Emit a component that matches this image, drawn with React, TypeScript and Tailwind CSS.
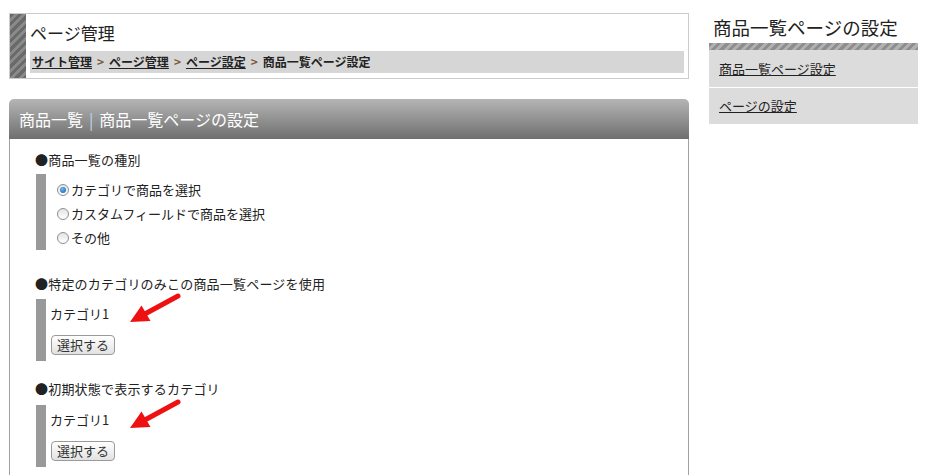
import React from "react";

const font = "font-['Noto_Sans_CJK_JP','Noto_Sans',sans-serif]";

function Radio({ checked }: { checked?: boolean }) {
  return (
    <span className="flex size-[12px] items-center justify-center rounded-full border border-[#8f8f8f] bg-[linear-gradient(180deg,#e4e4e4,#ffffff)]">
      {checked && (
        <span className="size-[6px] rounded-full bg-[radial-gradient(circle_at_40%_35%,#6fb6f0,#0b5fb0)]" />
      )}
    </span>
  );
}

function Arrow() {
  return (
    <svg
      className="absolute left-[90px] top-[-8px]"
      width="60"
      height="36"
      viewBox="0 0 60 36"
    >
      <line x1="17" y1="24" x2="52" y2="5" stroke="#ee1111" strokeWidth="5" strokeLinecap="round" />
      <polygon points="4,31 15.5,14.5 24.5,30" fill="#ee1111" />
    </svg>
  );
}

function SelectButton() {
  return (
    <button className="mt-[11px] ml-[1px] flex h-[20px] items-center rounded-[4px] border border-[#9a9a9a] bg-[linear-gradient(180deg,#ffffff,#e2e2e2)] px-[5px] text-[13px] text-[#333]">
      選択する
    </button>
  );
}

function Heading({ children }: { children: React.ReactNode }) {
  return <div className="flex h-[20px] items-center text-[13px] tracking-[0.2px] text-[#222]">●{children}</div>;
}

export default function App() {
  return (
    <div className={`${font} flex h-[475px] w-[930px] items-start gap-[20px] overflow-hidden bg-white pl-[9px] pt-[13px]`}>
      <div className="w-[680px]">
        {/* page header */}
        <div className="flex border border-[#cccccc]">
          <div className="w-[16px] bg-[repeating-linear-gradient(135deg,#6a6a6a_0px,#6a6a6a_3px,#8a8a8a_3px,#8a8a8a_6px)]" />
          <div className="flex-1 px-[4px] pb-[5px]">
            <div className="flex h-[37px] items-center text-[17px] text-[#222]">ページ管理</div>
            <div className="flex h-[22px] items-center gap-[5px] bg-[#d6d6d6] px-[2px] text-[12px] font-bold text-[#222]">
              <span className="underline">サイト管理</span>
              <span className="text-[#7a5a3a]">&gt;</span>
              <span className="underline">ページ管理</span>
              <span className="text-[#7a5a3a]">&gt;</span>
              <span className="underline">ページ設定</span>
              <span className="text-[#7a5a3a]">&gt;</span>
              <span>商品一覧ページ設定</span>
            </div>
          </div>
        </div>

        {/* settings panel */}
        <div className="mt-[20px]">
          <div className="flex h-[40px] items-center rounded-t-[5px] bg-[linear-gradient(180deg,#b5b5b5,#6f6f6f)] pl-[10px] text-[16px] text-white">
            商品一覧<span className="mx-[6px] text-[#bcd8f2]">|</span>商品一覧ページの設定
          </div>
          <div className="h-[400px] border-x border-[#a0a0a0] pl-[25px] pt-[11px]">
            <Heading>商品一覧の種別</Heading>
            <div className="mt-[4px] ml-[1px] flex">
              <div className="w-[10px] bg-[#999999]" />
              <div className="pl-[11px] pt-[4px] text-[13px] text-[#222]">
                <div className="flex h-[24px] items-center gap-[2px]"><Radio checked />カテゴリで商品を選択</div>
                <div className="flex h-[24px] items-center gap-[2px]"><Radio />カスタムフィールドで商品を選択</div>
                <div className="flex h-[24px] items-center gap-[2px]"><Radio />その他</div>
              </div>
            </div>

            <div className="mt-[24px]">
              <Heading>特定のカテゴリのみこの商品一覧ページを使用</Heading>
              <div className="relative mt-[5px] ml-[1px] flex">
                <div className="w-[10px] bg-[#999999]" />
                <div className="pb-[6px] pl-[4px] pt-[5px] text-[13px] text-[#222]">
                  <div className="flex h-[20px] items-center">カテゴリ1</div>
                  <SelectButton />
                </div>
                <Arrow />
              </div>
            </div>

            <div className="mt-[18px]">
              <Heading>初期状態で表示するカテゴリ</Heading>
              <div className="relative mt-[6px] ml-[1px] flex">
                <div className="w-[10px] bg-[#999999]" />
                <div className="pb-[6px] pl-[4px] pt-[5px] text-[13px] text-[#222]">
                  <div className="flex h-[20px] items-center">カテゴリ1</div>
                  <SelectButton />
                </div>
                <Arrow />
              </div>
            </div>
          </div>
        </div>
      </div>

      {/* sidebar */}
      <div className="w-[209px]">
        <div className="flex h-[30px] items-center pl-[4px] text-[18.5px] text-[#222]">商品一覧ページの設定</div>
        <div className="h-[7px] bg-[repeating-linear-gradient(135deg,#8e8e8e_0px,#8e8e8e_3px,#b0b0b0_3px,#b0b0b0_6px)]" />
        <div className="flex h-[37px] items-center bg-[#dcdcdc] pl-[10px] text-[13px] text-[#222] underline">商品一覧ページ設定</div>
        <div className="mt-[1px] flex h-[36px] items-center bg-[#dcdcdc] pl-[10px] text-[13px] text-[#222] underline">ページの設定</div>
      </div>
    </div>
  );
}
